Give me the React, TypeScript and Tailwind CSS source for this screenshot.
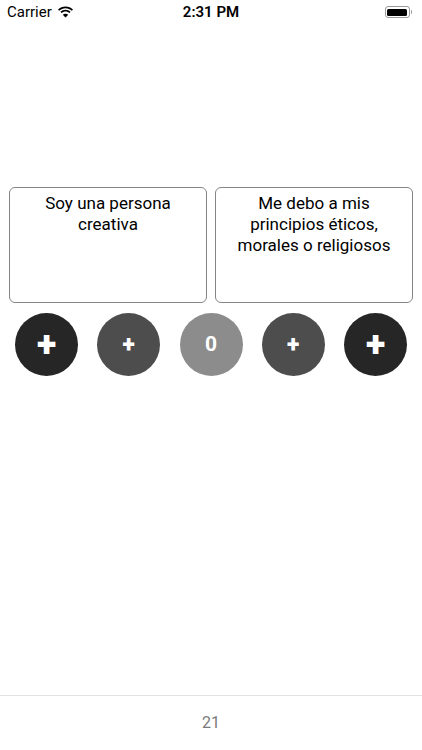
import React from 'react';

const WifiIcon = () => (
  <svg width="17" height="12" viewBox="0 0 17 12" fill="black">
    <path d="M8.5 2.2c2.4 0 4.6.9 6.3 2.5l1.2-1.3C14 1.5 11.4.4 8.5.4S3 1.5 1 3.4l1.2 1.3c1.7-1.6 3.9-2.5 6.3-2.5z" />
    <path d="M8.5 5.6c1.5 0 2.9.6 3.9 1.5l1.2-1.3C12.2 4.5 10.4 3.8 8.5 3.8S4.8 4.5 3.4 5.8l1.2 1.3c1-.9 2.4-1.5 3.9-1.5z" />
    <path d="M8.5 11.6l2.7-2.9c-.7-.6-1.7-1-2.7-1s-2 .4-2.7 1z" />
  </svg>
);

const Battery = () => (
  <div className="flex items-center">
    <div className="w-[25px] h-[12px] rounded-[3px] border border-[#9a9a9a] p-[1.5px]">
      <div className="w-full h-full rounded-[1.5px] bg-black" />
    </div>
    <div className="w-[1.5px] h-[4px] bg-[#9a9a9a] rounded-r-sm ml-[1px]" />
  </div>
);

type Choice = { label: string; bg: string; text: string };

const choices: Choice[] = [
  { label: '+', bg: 'bg-[#262626]', text: 'text-[36px] font-black' },
  { label: '+', bg: 'bg-[#4d4d4d]', text: 'text-[23px] font-black' },
  { label: '0', bg: 'bg-[#8c8c8c]', text: 'text-[21px] font-bold' },
  { label: '+', bg: 'bg-[#4d4d4d]', text: 'text-[23px] font-black' },
  { label: '+', bg: 'bg-[#262626]', text: 'text-[36px] font-black' },
];

const Statement = ({ children }: { children: React.ReactNode }) => (
  <div className="flex-1 h-[116px] border-[1.5px] border-[#858585] rounded-[6px] px-2 pt-[5px] text-center text-[17px] leading-[21px] text-black">
    {children}
  </div>
);

export default function App() {
  return (
    <div className="w-[422px] h-[750px] bg-white flex flex-col font-['Roboto','Liberation_Sans',sans-serif]">
      <div className="h-[24px] flex items-center justify-between px-[7px] text-[15px] text-black">
        <div className="flex items-center gap-[5px] w-[120px]">
          <span>Carrier</span>
          <WifiIcon />
        </div>
        <span className="font-semibold">2:31 PM</span>
        <div className="w-[120px] flex justify-end pr-[3px]">
          <Battery />
        </div>
      </div>

      <div className="flex-1 flex flex-col">
        <div className="flex gap-[8px] px-[9px] mt-[163px]">
          <Statement>Soy una persona creativa</Statement>
          <Statement>Me debo a mis principios éticos, morales o religiosos</Statement>
        </div>

        <div className="flex justify-between px-[15px] mt-[10px]">
          {choices.map((c, i) => (
            <button
              key={i}
              className={`w-[63px] h-[63px] rounded-full ${c.bg} flex items-center justify-center text-white ${c.text} leading-none`}
            >
              {c.label}
            </button>
          ))}
        </div>
      </div>

      <div className="h-[55px] border-t-[1.5px] border-[#e2e2e2] flex items-center justify-center text-[16px] text-[#7a7a7a]">
        21
      </div>
    </div>
  );
}
